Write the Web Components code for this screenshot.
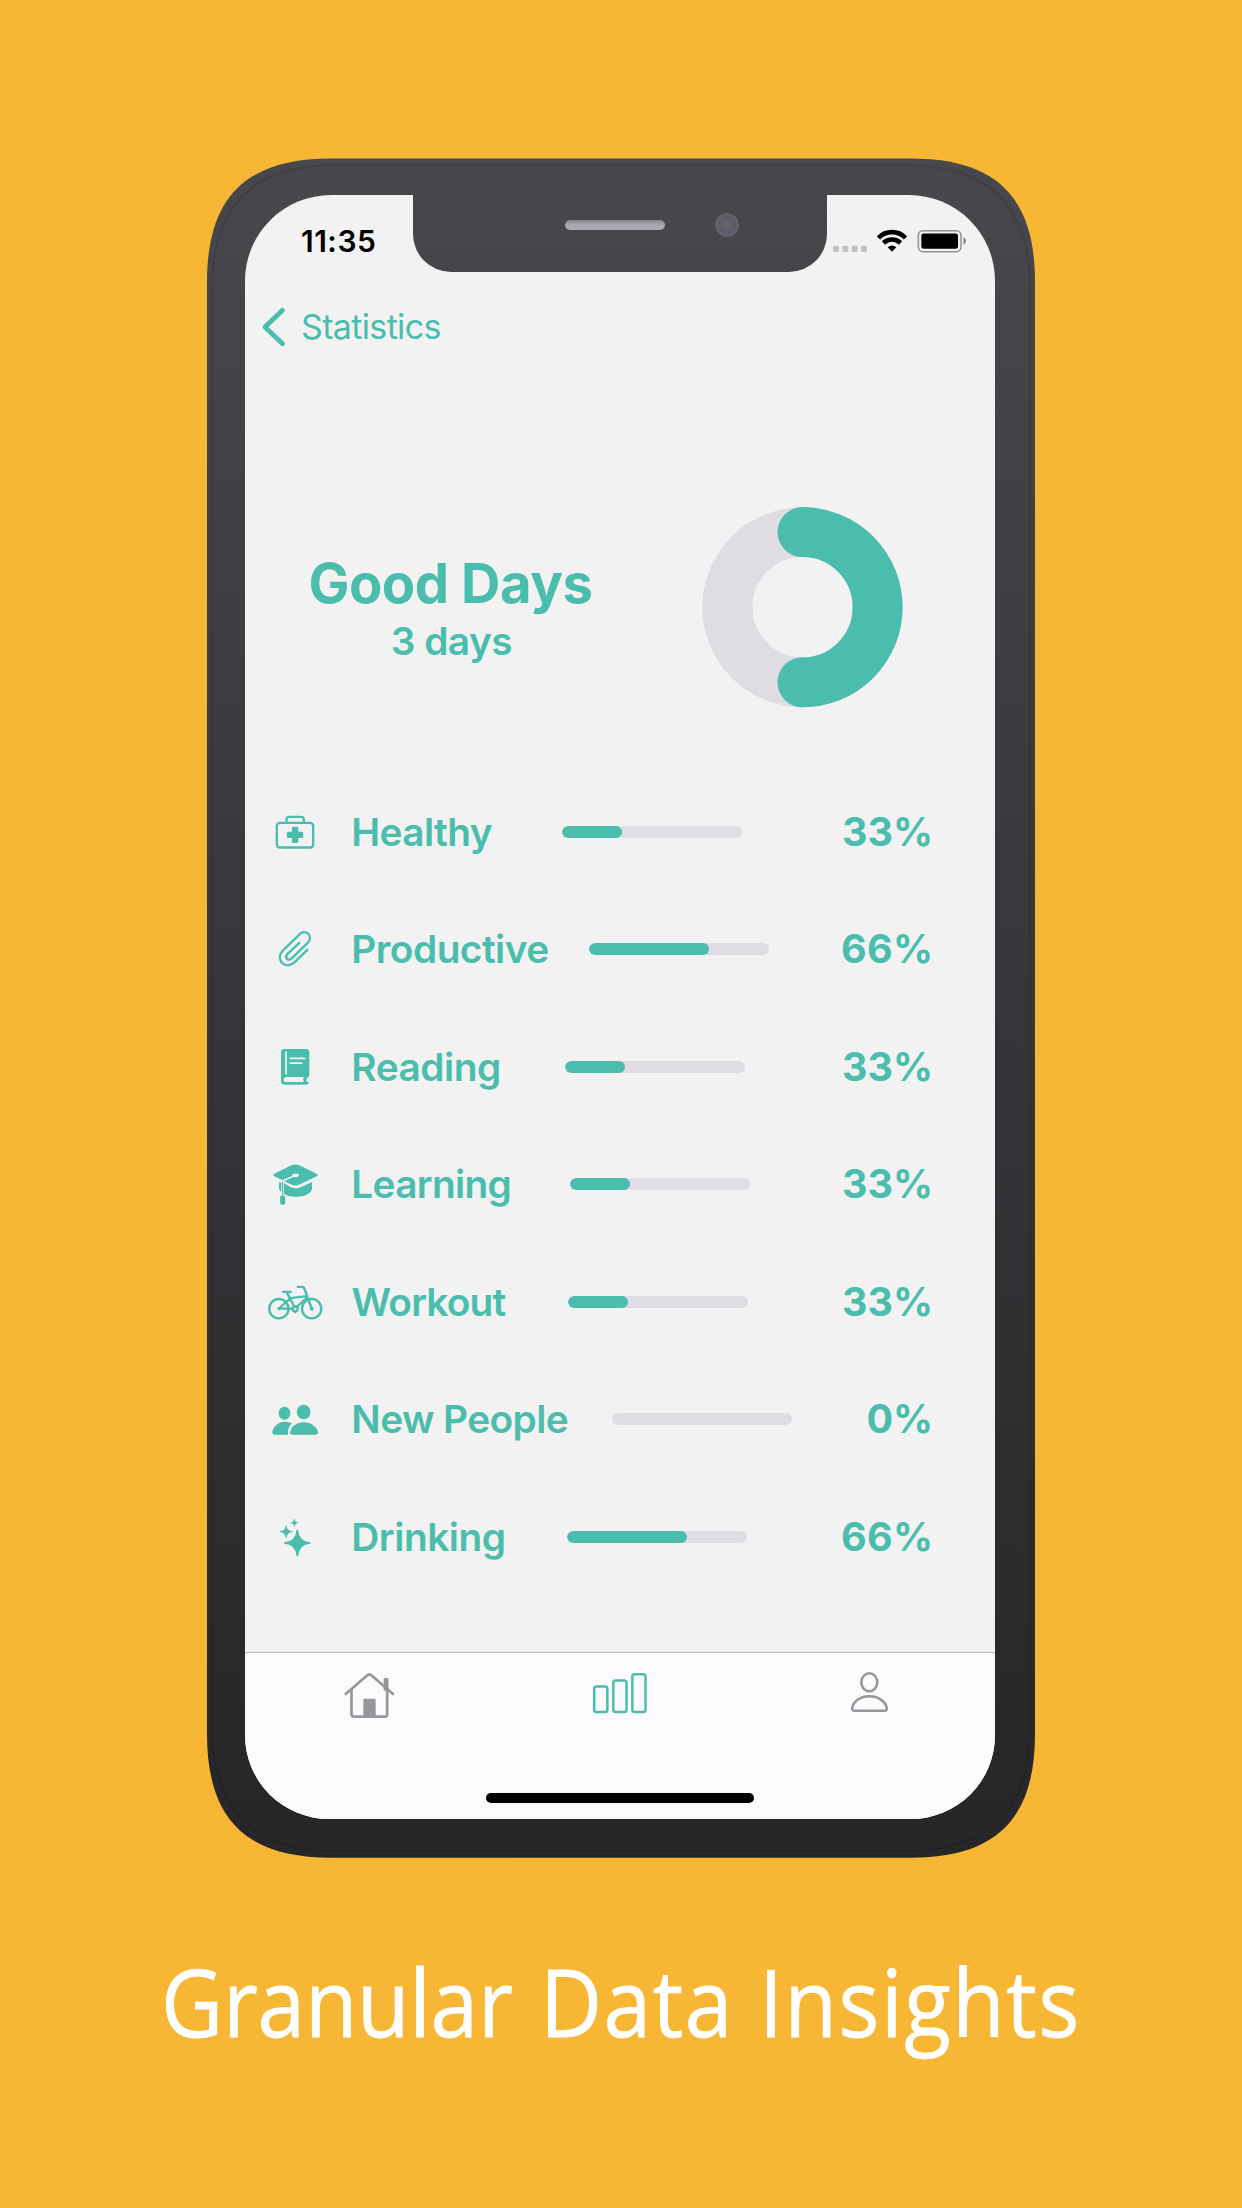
<!DOCTYPE html>
<html lang="en">
<head>
<meta charset="utf-8">
<title>Granular Data Insights</title>
<style>
html,body{margin:0;padding:0}
body{width:1242px;height:2208px;overflow:hidden;background:#f7b633;font-family:Inter,"Liberation Sans",sans-serif}
</style>
</head>
<body>
<promo-page></promo-page>
<script>
const define = (name, html, init) => customElements.define(name, class extends HTMLElement {
  connectedCallback() {
    if (this.shadowRoot) return;
    const t = document.createElement('template');
    t.innerHTML = typeof html === 'function' ? html(this) : html;
    this.attachShadow({mode: 'open'}).append(t.content.cloneNode(true));
    if (init) init(this);
  }
});

/* A single line whose drawn width is set by its "ink" attribute through tracking;
   "squeeze" condenses the letterforms horizontally. */
define('tracked-text', '<style>:host{display:block;white-space:nowrap;flex:none}span{display:inline-block;transform-origin:0 50%}</style><span><slot></slot></span>', el => {
  const cs = getComputedStyle(el), text = el.textContent, ink = +el.getAttribute('ink');
  const squeeze = +(el.getAttribute('squeeze') || 1);
  const ctx = document.createElement('canvas').getContext('2d');
  ctx.font = `${cs.fontWeight} ${cs.fontSize} ${cs.fontFamily}`;
  const m = ctx.measureText(text);
  const span = el.shadowRoot.querySelector('span');
  const bearings = m.width - m.actualBoundingBoxRight - m.actualBoundingBoxLeft;
  const natural = span.getBoundingClientRect().width - bearings;
  span.style.letterSpacing = (ink / squeeze - natural) / (text.length - 1) + 'px';
  span.style.marginLeft = m.actualBoundingBoxLeft * squeeze + 'px';
  if (squeeze !== 1) span.style.transform = `scaleX(${squeeze})`;
  el.style.width = ink + 'px';
});

const star = (x, y, r) => {
  const k = r * .13, e = r * .06;
  return `M${x-e} ${y-r}Q${x} ${y-r-1} ${x+e} ${y-r}Q${x+k} ${y-k} ${x+r} ${y-e}Q${x+r+1} ${y} ${x+r} ${y+e}Q${x+k} ${y+k} ${x+e} ${y+r}Q${x} ${y+r+1} ${x-e} ${y+r}Q${x-k} ${y+k} ${x-r} ${y+e}Q${x-r-1} ${y} ${x-r} ${y-e}Q${x-k} ${y-k} ${x-e} ${y-r}Z`;
};
const icons = {
  medkit: ['39 31', '<g class="s"><rect x="80.5" y="99.5" width="109" height="74" rx="9"/><path d="M109.500 98V90q0-8.500 8.500-8.500h35q8.500 0 8.500 8.500V98"/></g><rect x="126" y="111" width="19" height="49" rx="4"/><rect x="110.500" y="126" width="49" height="19" rx="4"/>'],
  clip: ['39 383.500', '<path class="s" d="M172 482L134 519C122 531 107 531 97 522C87 512 87 497 97 486L147 437C155 427 167 427 174 433C182 441 182 452 173 461L126 507C121 512 115 513 111 509C107 505 107 500 112 495L148 461"/>'],
  book: ['39 736', '<rect x="93" y="778" width="85" height="107" rx="10"/><g fill="#f2f2f2"><path d="M110 862H161Q157 869 161 877H107Q101 877 101 870Q102 862 110 862Z"/><path d="M179 855Q177 862 171 865Q167 871 171 876L176 878.500H179Z"/></g><g fill="none" stroke="#f2f2f2" stroke-linecap="round" stroke-width="5.500"><path stroke-width="5" d="M108 788V852"/><path d="M121 806H164M121 820.500H155"/></g>'],
  cap: ['39 37', '<path d="M73 102L124 77Q136 72 148 77L200 102Q207 106 200 110L150 134Q136 141 122 134L73 110Q66 106 73 102Z"/><path d="M102 131L120 141Q136 150 152 143L186 127V148C182 164 160 171 140 171C120 171 108 168 102 162ZM87 127L94 130V158Q87 152 87 144Z"/><path d="M98 124V165" stroke="currentColor" stroke-width="3.500"/><rect x="90.500" y="167" width="15" height="28" rx="6"/><ellipse cx="137" cy="107" rx="10" ry="5.500" fill="#f2f2f2"/><path d="M134 108L97 124" fill="none" stroke="#f2f2f2" stroke-width="4.500"/>'],
  bike: ['39 389.500', '<g class="s"><circle cx="86.500" cy="505.500" r="29"/><circle cx="185" cy="505.500" r="29"/><circle cx="135.500" cy="506" r="7.500"/><path d="M99 455H122M110 456L133 500M143 440H157Q161 440 163 445L185 505M87 505.500H128M87 505L121 474L171 468M140 500L173 471M135 514V516"/></g><circle cx="87" cy="505.500" r="5"/><circle cx="185" cy="505.500" r="6"/>'],
  people: ['39 82', '<ellipse cx="161" cy="157" rx="20.500" ry="22"/><path d="M120 220C122 201 140 188 161 188C183 188 202 203 204 218Q204 225 197 225H127Q120 225 120 220Z"/><ellipse cx="103.500" cy="160.500" rx="17.500" ry="19.500"/><path d="M67 217C70 199 86 186 104 186Q116 186 126 191Q112 203 114 225H74Q67 225 67 217Z"/>'],
  sparkles: ['39 435', `<path d="${star(142,549,39)}${star(108.5,515,18.5)}${star(133,488,12)}"/>`],
  home: ['414 62', '<g fill="none" stroke="currentColor" stroke-width="8" stroke-linecap="round" stroke-linejoin="round"><path d="M437 161L502 105Q508 100 514 105L579 161"/><path d="M454.500 149V222Q454.500 229 462 229H555Q561.500 229 561.500 222V149"/></g><rect x="490" y="175" width="37" height="54" rx="3"/><rect x="551" y="113" width="14.500" height="38" rx="3"/>'],
  chart: ['1164 62', '<g fill="none" stroke="currentColor" stroke-width="7.500"><rect x="1182.500" y="138.500" width="39.500" height="76.500" rx="7"/><rect x="1240" y="120.500" width="39.500" height="94.500" rx="7"/><rect x="1297" y="102" width="39.500" height="113" rx="7"/></g>'],
  person: ['714 62', '<g fill="none" stroke="currentColor" stroke-width="7.500"><ellipse cx="808" cy="126" rx="24" ry="27"/><path d="M756.500 204C760 182 782 168 808 168C834 168 857 182 860.500 204Q861 211.500 854 211.500H763Q756 211.500 756.500 204Z"/></g>']
};
define('app-icon', el => {
  const [origin, body] = icons[el.getAttribute('name')];
  return `<style>:host{display:block;flex:none;width:64px;height:64px}svg{display:block}.s{fill:none;stroke:currentColor;stroke-width:7;stroke-linecap:round;stroke-linejoin:round}</style><svg width="64" height="64" viewBox="${origin} 192 192" fill="currentColor">${body}</svg>`;
});

define('status-bar', `<style>
:host{display:flex;height:77px;color:#000}
.time{width:168px;box-sizing:border-box;padding-left:57px;font-size:30px;font-weight:600;line-height:93px}
.notch{width:414px;box-sizing:border-box;margin-top:-1px;padding:11px 0 28px 152px;height:78px;display:flex;align-items:center;gap:50px;border-radius:0 0 38px 38px;background:linear-gradient(#48474b,#454449)}
.speaker{width:100px;height:10px;border-radius:5px;background:linear-gradient(#858490,#a9a8b3 50%,#aaa9b4)}
.camera{width:24px;height:24px;box-sizing:border-box;border-radius:50%;border:3px solid #62606c;background:radial-gradient(circle at 45% 45%,#666471,#565460)}
svg{display:block}
</style>
<div class="time"><tracked-text ink="73">11:35</tracked-text></div>
<div class="notch"><div class="speaker"></div><div class="camera"></div></div>
<svg width="168" height="77" viewBox="621 135 504 231">
<g fill="#c1c1c1"><rect x="639" y="287" width="18" height="19" rx="5"/><rect x="667" y="287" width="18" height="19" rx="5"/><rect x="695" y="287" width="18" height="19" rx="5"/><rect x="723" y="287" width="18" height="19" rx="5"/></g>
<g fill="none" stroke="#000" stroke-width="14"><path d="M775.400 263.800A56.500 56.500 0 0 1 856.600 263.800"/><path d="M790.500 279A36 36 0 0 1 841.500 279"/></g><path d="M814.500 303.500L803 292Q816 281 829 292L817.500 303.500Q816 305 814.500 303.500Z"/>
<rect x="895" y="242" width="128" height="63" rx="14" fill="none" stroke="#919191" stroke-width="4.500"/><rect x="904" y="250.500" width="110" height="46" rx="7"/><path fill="#858585" d="M1030.500 261Q1038 265 1038 273Q1038 281 1030.500 285Z"/></svg>`);

define('nav-back', el => `<style>:host{display:flex;align-items:center;height:110px;color:#4abdad;font-size:34px;font-weight:400;line-height:40px}svg{display:block;margin:0 14px 0 16px}</style>
<svg width="27" height="42" viewBox="184 468 81 126"><path d="M248.500 481L196 531L248.500 581" fill="none" stroke="currentColor" stroke-width="14.500" stroke-linecap="round" stroke-linejoin="round"/></svg><tracked-text ink="138.500">${el.getAttribute('label')}</tracked-text>`);

define('ring-chart', `<style>:host{display:block;width:201px;height:202px}svg{display:block}</style>
<svg width="201" height="202" viewBox="-100.500 -101.200 201 202" fill="none" stroke-width="50"><circle r="75.100" stroke="#dfdce3"/><path d="M0 -75.100A75.100 75.100 0 0 1 0 75.100" stroke="#4abdad" stroke-linecap="round"/></svg>`);

define('day-summary', `<style>:host{display:flex;align-items:flex-start;height:201px;padding:0 92.500px 0 65.500px;justify-content:space-between}
.text{display:flex;flex-direction:column;align-items:center;padding-top:44.500px}
.title{font-size:54.500px;font-weight:700;line-height:64px}.sub{font-size:38.800px;font-weight:600;line-height:50px;margin:1px 0 0 2px}</style>
<div class="text"><tracked-text class="title" ink="281">Good Days</tracked-text><tracked-text class="sub" ink="118.500">3 days</tracked-text></div><ring-chart></ring-chart>`);

define('stat-row', el => {
  const a = n => el.getAttribute(n);
  return `<style>
:host{display:flex;align-items:center;height:117.450px;padding:0 65px 0 18px;font-size:38.800px;line-height:50px;font-weight:600}
app-icon{margin-right:${26.3 + +(a('shift') || 0)}px}.gap{flex:1}
.bar{width:180px;height:12px;border-radius:6px;background:#dfdce3;overflow:hidden}
.fill{height:12px;border-radius:6px;background:#4abdad;width:${+a('value')*1.01}%}
.pct{margin-left:32px;font-weight:700;font-size:39.500px;font-optical-sizing:none}</style>
<app-icon name="${a('icon')}"></app-icon><tracked-text ink="${a('ink')}">${a('label')}</tracked-text><div class="gap"></div><div class="bar"><div class="fill"></div></div><div class="gap"></div><tracked-text class="pct" ink="${a('pink')}">${a('value')}%</tracked-text>`;
});

define('tab-bar', `<style>:host{display:flex;flex-direction:column;align-items:center;justify-content:space-between;height:167px;box-sizing:border-box;border-top:1px solid #b9b7ba;background:#fcfafd;padding:8px 0 16px;color:#98969a}
.tabs{display:grid;grid-template-columns:repeat(3,1fr);width:750px;justify-items:center}.on{color:#4abdad}
.pill{width:268px;height:10px;border-radius:5px;background:#000}</style>
<div class="tabs"><app-icon name="home"></app-icon><app-icon name="chart" class="on"></app-icon><app-icon name="person"></app-icon></div><div class="pill"></div>`);

define('phone-frame', `<style>:host{display:grid;width:828px;height:1700px}
svg,.screen{grid-area:1/1}
.screen{margin:37px 0 0 38px;width:750px;height:1624px;border-radius:86px 86px 84px 84px;overflow:hidden;background:#f2f2f2;display:flex;flex-direction:column}</style>
<svg width="828" height="1700" viewBox="0 0 828 1700"><defs><linearGradient id="b" x1="0" y1="0" x2="0" y2="1"><stop offset="0" stop-color="#48474b"/><stop offset=".5" stop-color="#363539"/><stop offset="1" stop-color="#262628"/></linearGradient></defs>
<path fill="url(#b)" d="M0 124C0 39 39 .5 124 .5H704C789 .5 828 39 828 124V1576C828 1661 789 1699.700 704 1699.700H124C39 1699.700 0 1661 0 1576Z"/>
<path fill="none" stroke="#000" stroke-opacity=".09" stroke-width="2" d="M5 131C5 47 46 7 130 7H698C782 7 823 47 823 131V1569C823 1653 782 1693 698 1693H130C46 1693 5 1653 5 1569Z"/></svg>
<div class="screen"><slot></slot></div>`);

define('promo-caption', `<style>:host{display:flex;font:450 94px/120px "Open Sans","Noto Sans",sans-serif;-webkit-text-stroke:.8px #fff;color:#fff;white-space:nowrap}
.b{margin:0 42px 0 36px}</style>
<tracked-text squeeze=".91" ink="346">Granular</tracked-text><tracked-text class="b" squeeze=".91" ink="177.500">Data</tracked-text><tracked-text squeeze=".91" ink="308.500">Insights</tracked-text>`);

define('promo-page', `<style>
:host{display:flex;flex-direction:column;align-items:center;height:2208px;box-sizing:border-box;padding-top:158px}
.content{display:flex;flex-direction:column;height:1380px;color:#4abdad}
day-summary{margin-top:124px}.rows{margin-top:66.250px}
promo-caption{margin-top:83px}
</style>
<phone-frame>
<status-bar></status-bar>
<div class="content"><nav-back label="Statistics"></nav-back><day-summary></day-summary>
<div class="rows">
<stat-row icon="medkit" label="Healthy" ink="139.500" value="33" pink="87"></stat-row>
<stat-row icon="clip" label="Productive" ink="195" value="66" pink="88"></stat-row>
<stat-row icon="book" label="Reading" ink="145.800" value="33" pink="87"></stat-row>
<stat-row icon="cap" label="Learning" ink="156.300" value="33" pink="87"></stat-row>
<stat-row icon="bike" label="Workout" shift="-1.800" ink="154" value="33" pink="87"></stat-row>
<stat-row icon="people" label="New People" ink="214.500" value="0" pink="62.500"></stat-row>
<stat-row icon="sparkles" label="Drinking" ink="150.500" value="66" pink="88"></stat-row>
</div></div>
<tab-bar></tab-bar>
</phone-frame>
<promo-caption></promo-caption>`);
</script>
</body>
</html>
